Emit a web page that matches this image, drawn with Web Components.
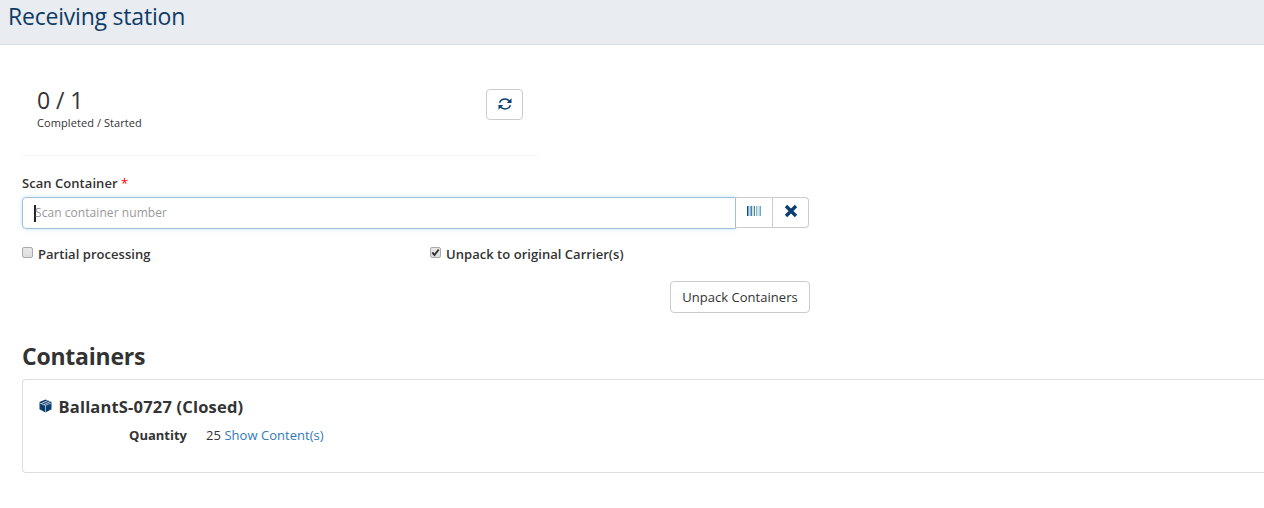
<!DOCTYPE html>
<html lang="en">
<head>
<meta charset="utf-8">
<title>Receiving station</title>
<style>
html,body{margin:0;height:100%;overflow:hidden;background:#fff}
body{font-family:"Open Sans",sans-serif;font-size:13px;line-height:18px;color:#333}
</style>
</head>
<body>
<receiving-page></receiving-page>
<script>
const define = (name, html) => customElements.define(name, class extends HTMLElement {
  constructor() {
    super();
    const t = document.createElement('template');
    t.innerHTML = html;
    this.attachShadow({ mode: 'open' }).append(t.content.cloneNode(true));
  }
});

define('page-header', `<style>
:host{display:block;box-sizing:border-box;height:45px;background:#e9ecf0;border-bottom:1px solid #d9dfe7;padding-left:8px}
h1{margin:0;font-size:23px;line-height:32px;font-weight:400;letter-spacing:-.21px;color:#0f3c66;white-space:nowrap}
</style><h1><slot></slot></h1>`);

define('icon-button', `<style>
:host{display:block}
button{display:flex;align-items:center;justify-content:center;box-sizing:border-box;width:100%;height:100%;margin:0;padding:0;
font:inherit;letter-spacing:inherit;color:#333;background:#fff;border:1px solid #ccc;border-width:var(--bw,1px);border-radius:var(--radius,4px);white-space:nowrap}
</style><button><slot></slot></button>`);

define('icon-refresh', `<style>:host,svg{display:block}:host{margin-top:-1px}</style>
<svg width="14" height="14" viewBox="0 0 14 14" fill="none" stroke="#0b3e70" stroke-width="1.500"><path d="M1.600 5.700C2.500 3.200 4.500 2 7 2c1.900 0 3.400.8 4.500 2.200M12.400 8.300C11.500 10.800 9.500 12 7 12c-1.900 0-3.400-.8-4.500-2.200"/><path fill="#0b3e70" stroke="none" d="M13.500 1.300v4.600H8.900zM.5 12.700V8.100h4.600z"/></svg>`);

define('icon-barcode', `<style>:host,svg{display:block}</style>
<svg width="14" height="10" viewBox="0 0 14 10"><path fill="#0b4c96" d="M0 0h1.500v10H0z"/><path fill="#7cb9dc" d="M2.500 0H4v10H2.500zM9 0h1v10H9z"/><path fill="#537ea1" d="M4 0h1v10H4zM7 0h1v10H7z"/><path fill="#a3c9a6" d="M5.500 0h1v10h-1zM10.500 0h1v10h-1z"/><path fill="#66a9d5" d="M12.500 0H14v10h-1.500z"/></svg>`);

define('icon-close', `<style>:host,svg{display:block}</style>
<svg width="14" height="14" viewBox="0 0 14 14"><path d="M2 2l10 10M12 2L2 12" stroke="#0b3e70" stroke-width="3.400" fill="none"/></svg>`);

define('icon-box', `<style>:host,svg{display:block}</style>
<svg width="13" height="14" viewBox="0 0 13 14"><path fill="#0b3e70" d="M6.500.5L12.500 3v7.300L6.500 13.500.5 10.300V3z"/><path d="M.7 4l5.800 2.400L12.300 4M6.500 6.400v7" stroke="#fff" stroke-width=".6" fill="none"/><path d="M2.300 4.600L8.600 1.700M4.800 5.600l6.200-2.900" stroke="#fff" stroke-width="1" fill="none" opacity=".75"/></svg>`);

define('progress-card', `<style>
:host{display:flex;justify-content:space-between;box-sizing:border-box;width:516px;height:82px;padding:16px 15px 0;border-radius:4px;box-shadow:0 1px 1px rgba(0,0,0,.05)}
.n{font-size:23px;line-height:25px;color:#333;letter-spacing:-.1px;margin-top:-1px}
.l{font-size:11px;line-height:15px;margin-top:2px;letter-spacing:.08px}
icon-button{width:37px;height:31px}
</style><div><div class="n"><slot name="count"></slot></div><div class="l"><slot></slot></div></div>
<icon-button><icon-refresh></icon-refresh></icon-button>`);

define('scan-field', `<style>
:host{display:block;width:787px}
label{display:block;font-weight:600;line-height:18px;height:23px;letter-spacing:.05px}
b{color:red;font-weight:400}
.g{display:flex;height:32px}
.i{display:flex;align-items:center;box-sizing:border-box;width:714px;border:1px solid #9fbfdb;border-radius:4px 0 0 4px;box-shadow:0 0 5px rgba(102,175,233,.35);padding-left:12px;font-size:12px;letter-spacing:.06px;color:#999}
.c{width:2px;height:17px;background:#222;margin-right:-2px;margin-left:-1px}
.c+span{padding-left:1px}
icon-button{height:31px}
.s{width:37px;--bw:1px 1px 1px 0;--radius:0}
.x{width:36px;--bw:1px 1px 1px 0;--radius:0 4px 4px 0}
icon-barcode{margin-top:-3px}icon-close{margin-top:-3px}
</style><label><slot></slot> <b>*</b></label>
<div class="g"><div class="i"><i class="c"></i><span>Scan container number</span></div>
<icon-button class="s"><icon-barcode></icon-barcode></icon-button><icon-button class="x"><icon-close></icon-close></icon-button></div>`);

define('check-option', `<style>
:host{display:flex;font-weight:600;line-height:18px;white-space:nowrap;letter-spacing:.04px}
i{box-sizing:border-box;width:11px;height:11px;margin:2px 5px 0 0;border:1px solid #aaa;border-radius:2px;background:linear-gradient(#e8e8e8,#dedede)}
svg{display:none}
:host([checked]) svg{display:block}
</style><i><svg width="9" height="9" viewBox="0 0 9 9"><path d="M1.300 4.500l2.200 2.500L7.700 1.500" fill="none" stroke="#333" stroke-width="1.900"/></svg></i><span><slot></slot></span>`);

define('container-card', `<style>
:host{display:block;box-sizing:border-box;height:94px;border:1px solid #ddd;border-right:0;border-radius:4px 0 0 4px;padding:16px 16px 0}
.t{display:flex;align-items:center;gap:6.500px;font-size:16.500px;line-height:22px;font-weight:700;letter-spacing:.18px}
icon-box{margin-top:-3px}
.r{display:flex;margin-top:8px;line-height:18px}
.k{width:148px;text-align:right;font-weight:700;margin-right:19px}
.v{letter-spacing:.04px}
.v ::slotted(a){color:#337ab7;text-decoration:none}
</style><div class="t"><icon-box></icon-box><slot name="title"></slot></div>
<div class="r"><div class="k">Quantity</div><div class="v"><slot></slot></div></div>`);

define('receiving-page', `<style>
:host{display:block}
main{padding:28px 0 0 22px}
scan-field{margin-top:19px}
.o{display:grid;grid-template-columns:408px 1fr;margin-top:16px}
.a{display:flex;justify-content:flex-end;width:788px;margin-top:18px}
.a icon-button{width:140px;height:32px;letter-spacing:.03px}
h2{margin:29px 0 8px;font-size:23px;line-height:29px;font-weight:700;letter-spacing:-.22px}
</style>
<page-header>Receiving station</page-header>
<main>
<progress-card><span slot="count">0 / 1</span>Completed / Started</progress-card>
<scan-field>Scan Container</scan-field>
<div class="o"><check-option>Partial processing</check-option><check-option checked>Unpack to original Carrier(s)</check-option></div>
<div class="a"><icon-button>Unpack Containers</icon-button></div>
<h2>Containers</h2>
<container-card><span slot="title">BallantS-0727 (Closed)</span>25 <a href="#">Show Content(s)</a></container-card>
</main>`);
</script>
</body>
</html>
